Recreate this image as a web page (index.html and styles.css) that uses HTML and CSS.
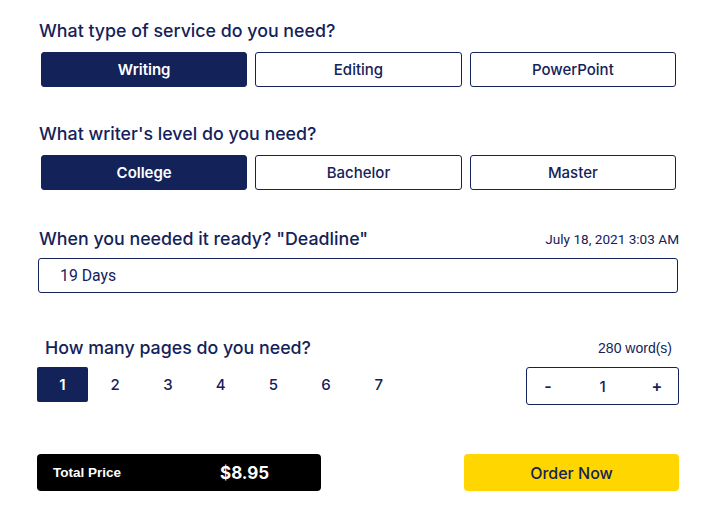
FILE: index.html
```html
<!DOCTYPE html>
<html lang="en">
<head>
    <meta charset="UTF-8">
    <meta name="viewport" content="width=device-width, initial-scale=1.0">
    <title>Order Form</title>
    <link rel="stylesheet" href="styles.css">
</head>
<body>
    <div class="order">
        <!-- service type -->
        <div class="section first">
            <h2 class="title">What type of service do you need?</h2>
            <div class="options">
                <button class="option active">Writing</button>
                <button class="option">Editing</button>
                <button class="option">PowerPoint</button>
            </div>
        </div>

        <!-- writer level -->
        <div class="section level">
            <h2 class="title">What writer's level do you need?</h2>
            <div class="options">
                <button class="option active">College</button>
                <button class="option">Bachelor</button>
                <button class="option">Master</button>
            </div>
        </div>

        <!-- deadline -->
        <div class="section deadline">
            <div class="row">
                <h2 class="title">When you needed it ready? "Deadline"</h2>
                <span class="note">July 18, 2021 3:03 AM</span>
            </div>
            <div class="field">19 Days</div>
        </div>

        <!-- pages -->
        <div class="section pages">
            <div class="row">
                <h2 class="title">How many pages do you need?</h2>
                <span class="note words">280 word(s)</span>
            </div>
            <div class="row">
                <div class="page-list">
                    <button class="page active">1</button>
                    <button class="page">2</button>
                    <button class="page">3</button>
                    <button class="page">4</button>
                    <button class="page">5</button>
                    <button class="page">6</button>
                    <button class="page">7</button>
                </div>
                <div class="stepper">
                    <button class="step">-</button>
                    <span class="count">1</span>
                    <button class="step">+</button>
                </div>
            </div>
        </div>

        <!-- footer -->
        <div class="footer">
            <div class="total">
                <span class="total-label">Total Price</span>
                <span class="total-value">$8.95</span>
            </div>
            <button class="order-btn">Order Now</button>
        </div>
    </div>
</body>
</html>
```

FILE: styles.css
```css
body {
    margin: 0;
    background-color: #ffffff;
    color: #14225a;
    font-family: Inter, "Noto Sans", sans-serif;
}

button {
    font-family: inherit;
    cursor: pointer;
}

/* Main wrapper */
.order {
    width: 642px;
    padding: 19px 0 0 37px;
}

.section {
    margin-bottom: 35px;
}

.section.level {
    margin-bottom: 37px;
}

.title {
    margin: 0 0 0 2px;
    height: 23px;
    line-height: 23px;
    font-size: 17.8px;
    font-weight: 500;
    color: #14225a;
}

/* Option buttons */
.options {
    display: grid;
    grid-template-columns: repeat(3, 1fr);
    gap: 8px;
    margin: 10px 3px 0 4px;
}

.option {
    height: 35px;
    border: 1px solid #14225a;
    border-radius: 3px;
    background-color: #ffffff;
    color: #14225a;
    font-size: 15px;
    font-weight: 500;
}

.option.active {
    background-color: #14225a;
    color: #ffffff;
    font-weight: 600;
}

.row {
    display: flex;
    justify-content: space-between;
    align-items: center;
}

.note {
    font-family: Roboto, sans-serif;
    font-size: 13.6px;
    color: #14225a;
}

/* Deadline */
.section.deadline {
    margin-bottom: 43px;
}

.field {
    margin: 8px 1px 0 1px;
    height: 33px;
    line-height: 33px;
    padding-left: 21px;
    border: 1px solid #14225a;
    border-radius: 3px;
    font-family: Roboto, sans-serif;
    font-size: 15.8px;
}

/* Pages */
.pages .title {
    margin-left: 8px;
}

.pages .row + .row {
    margin-top: 8px;
    align-items: flex-start;
}

.words {
    font-family: "Liberation Sans", Arial, sans-serif;
    font-size: 14px;
    margin-right: 7px;
}

.page-list {
    display: flex;
    gap: 2px;
}

.page {
    width: 51px;
    height: 35px;
    border: none;
    border-radius: 2px;
    background: none;
    color: #14225a;
    font-size: 15px;
    font-weight: 500;
}

.page + .page {
    margin-left: -0.3px;
}

.page.active {
    background-color: #14225a;
    color: #ffffff;
    font-weight: 600;
}

.stepper {
    display: flex;
    justify-content: space-between;
    align-items: center;
    width: 151px;
    height: 36px;
    border: 1px solid #14225a;
    border-radius: 3px;
}

.step {
    width: 42px;
    height: 36px;
    border: none;
    background: none;
    color: #14225a;
    font-size: 16px;
    font-weight: 600;
}

.count {
    font-size: 15px;
    font-weight: 500;
}

/* Footer */
.footer {
    display: flex;
    justify-content: space-between;
    margin-top: 49px;
}

.total {
    display: flex;
    align-items: center;
    width: 284px;
    height: 37px;
    background-color: #000000;
    border-radius: 4px;
    color: #ffffff;
}

.total-label {
    margin-left: 16px;
    width: 167px;
    font-family: "Liberation Sans", Arial, sans-serif;
    font-size: 13.5px;
    font-weight: bold;
}

.total-value {
    font-size: 17px;
    font-weight: 700;
}

.order-btn {
    width: 215px;
    height: 37px;
    border: none;
    border-radius: 4px;
    background-color: #ffd600;
    color: #14225a;
    font-size: 16px;
    font-weight: 500;
}
```
